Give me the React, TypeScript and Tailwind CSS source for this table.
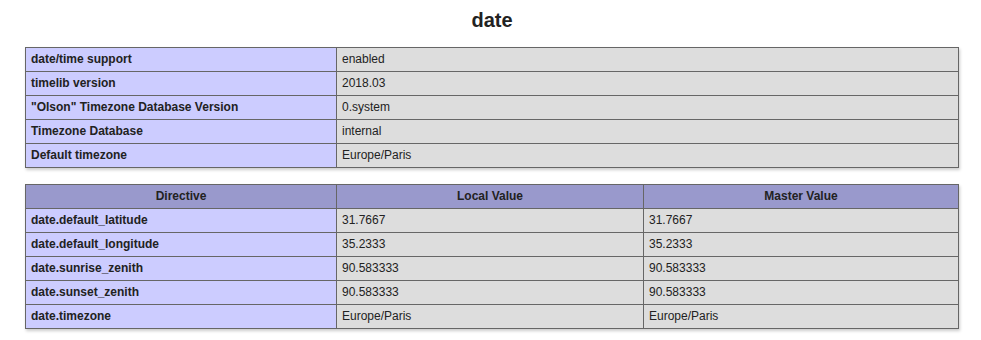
const info: [string, string][] = [
  ["date/time support", "enabled"],
  ["timelib version", "2018.03"],
  ['"Olson" Timezone Database Version', "0.system"],
  ["Timezone Database", "internal"],
  ["Default timezone", "Europe/Paris"],
];

const directives: [string, string, string][] = [
  ["date.default_latitude", "31.7667", "31.7667"],
  ["date.default_longitude", "35.2333", "35.2333"],
  ["date.sunrise_zenith", "90.583333", "90.583333"],
  ["date.sunset_zenith", "90.583333", "90.583333"],
  ["date.timezone", "Europe/Paris", "Europe/Paris"],
];

const cell = "border border-[#666] px-[5px] py-[4px] text-left align-baseline";

export default function App() {
  return (
    <div className="min-h-[340px] bg-white text-[#222] font-['Liberation_Sans',Arial,sans-serif]">
      <div className="w-[934px] ml-[25px]">
        <h2 className="pt-[7px] pb-[14px] text-center text-[20px] leading-[26px] font-bold">date</h2>

        {/* Module info */}
        <table className="w-[934px] border-collapse text-[12px] leading-[15px] shadow-[1px_2px_3px_#ccc]">
          <tbody>
            {info.map(([k, v]) => (
              <tr key={k}>
                <td className={`${cell} w-[311px] bg-[#ccf] font-bold`}>{k}</td>
                <td className={`${cell} bg-[#ddd]`}>{v}</td>
              </tr>
            ))}
          </tbody>
        </table>

        {/* Directives */}
        <table className="mt-[16px] w-[934px] border-collapse text-[12px] leading-[15px] shadow-[1px_2px_3px_#ccc]">
          <thead>
            <tr className="bg-[#99c] font-bold">
              <th className={`${cell} w-[311px] text-center!`}>Directive</th>
              <th className={`${cell} w-[307px] text-center!`}>Local Value</th>
              <th className={`${cell} text-center!`}>Master Value</th>
            </tr>
          </thead>
          <tbody>
            {directives.map(([k, l, m]) => (
              <tr key={k}>
                <td className={`${cell} bg-[#ccf] font-bold`}>{k}</td>
                <td className={`${cell} bg-[#ddd]`}>{l}</td>
                <td className={`${cell} bg-[#ddd]`}>{m}</td>
              </tr>
            ))}
          </tbody>
        </table>
      </div>
    </div>
  );
}
